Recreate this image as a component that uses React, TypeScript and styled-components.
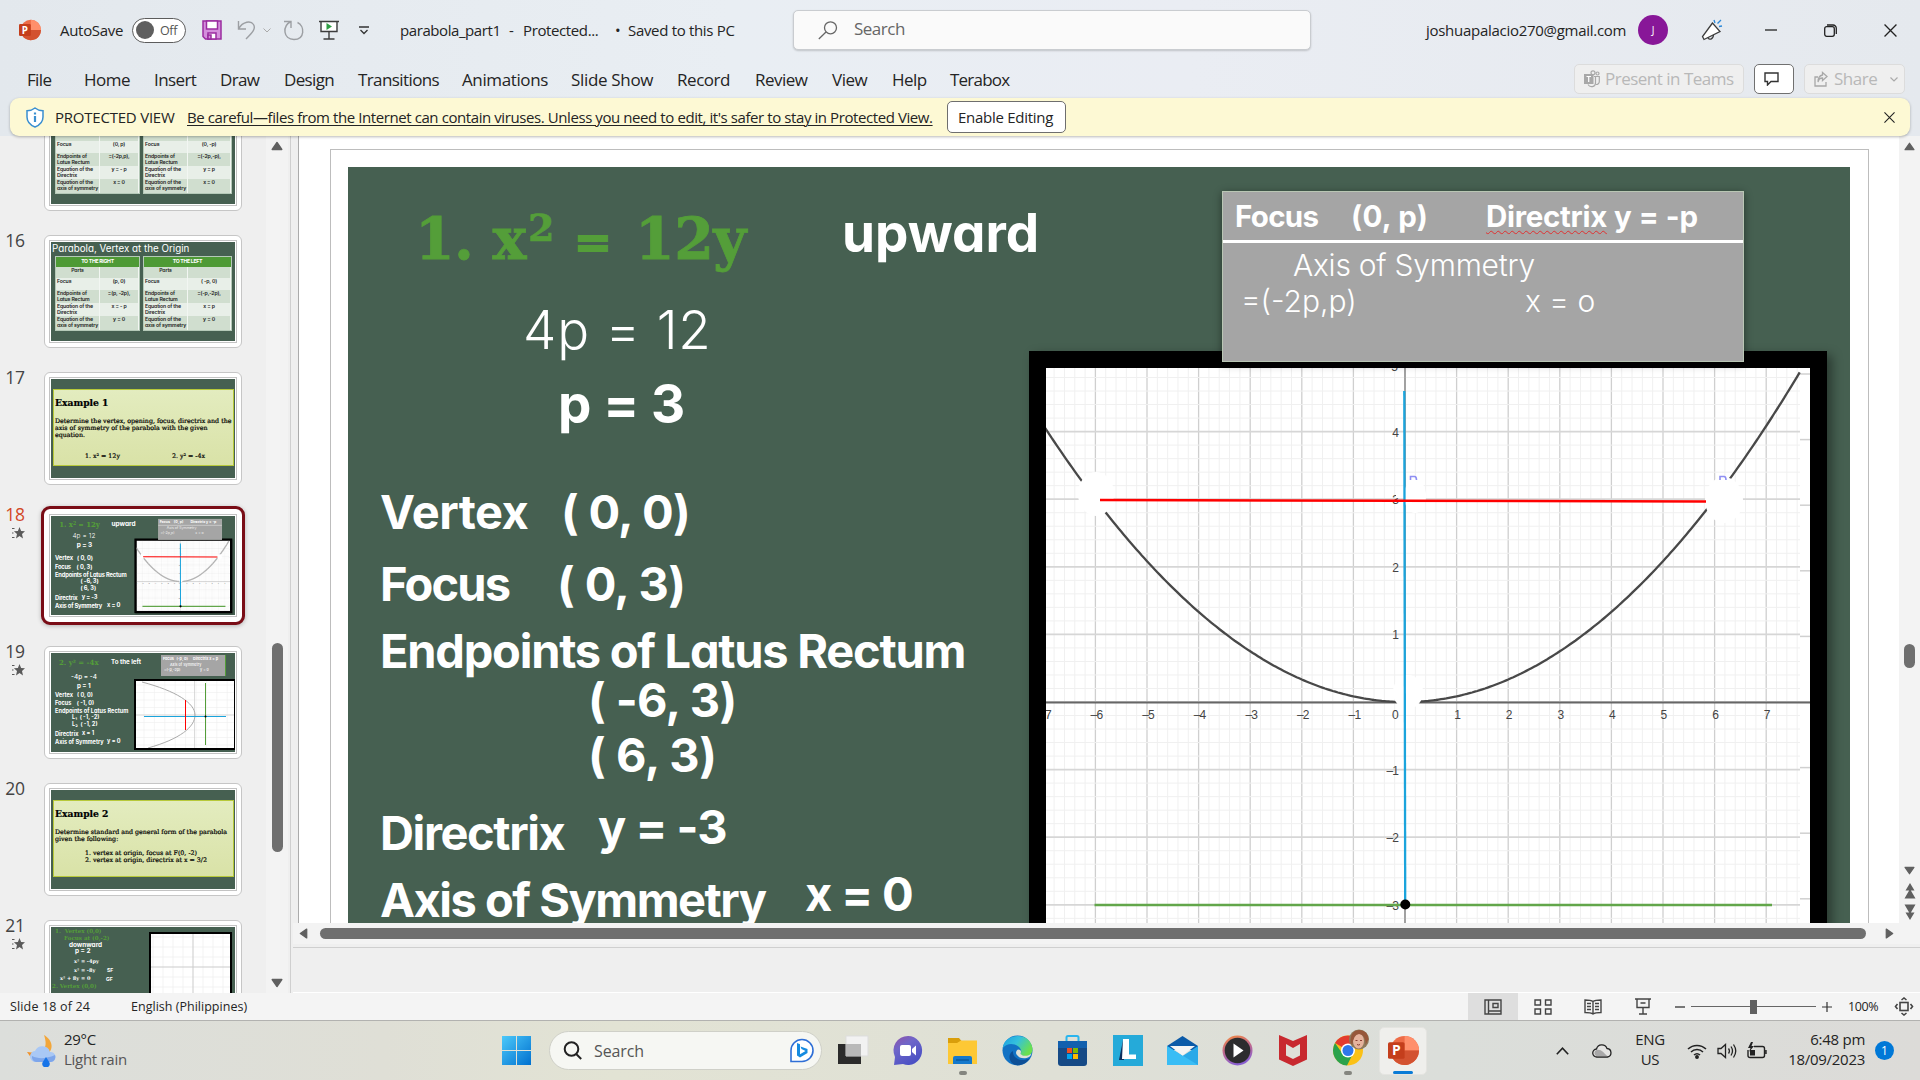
import React from "react";
import styled, { createGlobalStyle, css } from "styled-components";

const Global = createGlobalStyle`
  * { box-sizing: border-box; }
  body { margin: 0; background: #efefef; overflow: hidden; }
  svg { display: block; flex: none; }
`;

const ui = `"Open Sans", "Noto Sans", sans-serif`;
const geo = `Inter, "Open Sans", sans-serif`;
const slab = `"DejaVu Serif", serif`;
const GREEN = "#466051";
const LEAF = "#549e39";

/* ---------- shell ---------- */
const Shell = styled.div`
  width: 1920px;
  height: 1080px;
  display: flex;
  flex-direction: column;
  font-family: ${ui};
  font-size: 15px;
  color: #242424;
  overflow: hidden;
`;
const Header = styled.header`
  height: 136px;
  flex: none;
  display: flex;
  flex-direction: column;
  position: relative;
  z-index: 2;
  background: linear-gradient(90deg, #e3e8ed 0%, #e9eef3 38%, #eaedf3 62%, #e5e9ee 100%);
`;
const Bar = styled.div<{ h: number }>`
  height: ${(p) => p.h}px;
  display: flex;
  align-items: center;
  flex: none;
`;
const Label = styled.span<{ ml?: number; w?: number; ls?: number; size?: number; color?: string; up?: number; weight?: number }>`
  flex: none;
  margin-left: ${(p) => p.ml ?? 0}px;
  width: ${(p) => (p.w ? `${p.w}px` : "auto")};
  letter-spacing: ${(p) => p.ls ?? 0}px;
  font-size: ${(p) => p.size ?? 15}px;
  font-weight: ${(p) => p.weight ?? 400};
  color: ${(p) => p.color ?? "#242424"};
  padding-bottom: ${(p) => p.up ?? 0}px;
  white-space: nowrap;
`;
const Slot = styled.span<{ ml?: number; w: number }>`
  flex: none;
  display: flex;
  justify-content: center;
  align-items: center;
  margin-left: ${(p) => p.ml ?? 0}px;
  width: ${(p) => p.w}px;
`;
const Toggle = styled.span`
  flex: none;
  margin-left: 8px;
  width: 54px;
  height: 25px;
  border: 1px solid #5c5c5c;
  border-radius: 13px;
  background: #fff;
  display: flex;
  align-items: center;
  font-size: 12.5px;
  color: #555;
  gap: 6px;
  padding-left: 3px;
  letter-spacing: -0.4px;
  &::before { content: ""; width: 18px; height: 18px; border-radius: 50%; background: #5f5f5f; }
`;
const SearchBox = styled.div`
  flex: none;
  margin-left: 59px;
  width: 518px;
  height: 40px;
  border: 1px solid #c9ccd0;
  border-radius: 5px;
  background: #fafafa;
  box-shadow: 0 1px 2px rgba(0, 0, 0, 0.18);
  display: flex;
  align-items: center;
  padding-left: 24px;
`;
const Avatar = styled.span`
  flex: none;
  margin-left: 11px;
  width: 30px;
  height: 30px;
  border-radius: 50%;
  background: #881798;
  color: #fff;
  font-size: 10px;
  display: flex;
  align-items: center;
  justify-content: center;
`;
const Pill = styled.span<{ w: number; ml: number; on?: boolean }>`
  flex: none;
  margin-left: ${(p) => p.ml}px;
  width: ${(p) => p.w}px;
  height: 30px;
  border-radius: 5px;
  display: flex;
  align-items: center;
  padding-left: 9px;
  border: 1px solid ${(p) => (p.on ? "#707070" : "#dcdcdc")};
  background: ${(p) => (p.on ? "#fff" : "#efefef")};
`;
const Warning = styled.div`
  margin: 0 10px;
  height: 38px;
  border-radius: 9px;
  background: #fdf9d4;
  box-shadow: 0 1px 3px rgba(0, 0, 0, 0.28);
  display: flex;
  align-items: center;
  padding-left: 16px;
`;
const Underlined = styled(Label)`
  text-decoration: underline;
  text-underline-offset: 2px;
  text-decoration-thickness: 1px;
`;
const EnableButton = styled.button`
  margin: 0 0 0 14px;
  width: 119px;
  height: 32px;
  border: 1px solid #6e6e6e;
  border-radius: 5px;
  background: #fff;
  font: 15px ${ui};
  letter-spacing: -0.28px;
  color: #242424;
  padding: 0 2px 0 0;
`;

/* ---------- body ---------- */
const Body = styled.div`
  height: 857px;
  flex: none;
  display: flex;
  background: #efefef;
`;
const Panel = styled.aside`
  width: 266px;
  height: 857px;
  overflow: hidden;
  flex: none;
  display: flex;
  flex-direction: column;
`;
const ThumbRow = styled.div<{ first?: boolean }>`
  height: 137px;
  flex: none;
  display: flex;
  margin-top: ${(p) => (p.first ? -38 : 0)}px;
`;
const ThumbNo = styled.div<{ on?: boolean }>`
  width: 44px;
  margin-top: -6px;
  padding-right: 19px;
  font-size: 17.5px;
  line-height: 23px;
  letter-spacing: -0.1px;
  white-space: nowrap;
  color: ${(p) => (p.on ? "#d24726" : "#444")};
  display: flex;
  flex-direction: column;
  align-items: flex-end;
  gap: 1px;
`;
const ThumbFrame = styled.div<{ on?: boolean }>`
  width: 198px;
  height: 113px;
  border-radius: 6px;
  background: #fff;
  border: 1px solid #c6c6c6;
  padding: 4px;
  ${(p) => p.on && css`border-color: #fff; outline: 3px solid #7a0d16; box-shadow: 0 1px 4px 3px rgba(0,0,0,.25);`}
`;
const ThumbInner = styled.div`
  width: 188px;
  height: 103px;
  border: 1px solid #c3c3c3;
  padding: 1px;
`;
const Mini = styled.div`
  width: 184px;
  height: 99px;
  background: ${GREEN};
  position: relative;
  overflow: hidden;
`;
const Scroller = styled.div<{ w: number }>`
  width: ${(p) => p.w}px;
  flex: none;
  background: #f3f3f3;
  display: flex;
  flex-direction: column;
  align-items: center;
`;
const Knob = styled.div<{ w: number; h: number; mt?: number; ml?: number }>`
  flex: none;
  width: ${(p) => p.w}px;
  height: ${(p) => p.h}px;
  margin-top: ${(p) => p.mt ?? 0}px;
  margin-left: ${(p) => p.ml ?? 0}px;
  border-radius: 6px;
  background: #6f6f6f;
`;
const Spacer = styled.div<{ h?: number }>`
  flex: ${(p) => (p.h ? "none" : 1)};
  height: ${(p) => (p.h ? `${p.h}px` : "auto")};
`;
const Divider = styled.div`
  width: 8px;
  flex: none;
  border-left: 1px solid #cfcfcf;
  margin-left: 2px;
`;
const Main = styled.main`
  flex: 1;
  display: flex;
  flex-direction: column;
  min-width: 0;
`;
const View = styled.div`
  height: 787px;
  display: flex;
  flex: none;
`;
const Stage = styled.div`
  flex: 1;
  border-left: 1px solid #ababab;
  background: #fff;
  overflow: hidden;
  padding: 13px 0 0 31px;
`;
const Page = styled.div`
  width: 1539px;
  height: 840px;
  border: 1px solid #bdbdbd;
  padding: 17px 0 0 17px;
`;
const HScroll = styled.div`
  height: 21px;
  flex: none;
  display: flex;
  align-items: center;
  background: #f3f3f3;
  margin-left: -5px;
`;
const Notes = styled.div`
  flex: 1;
  margin-top: 3px;
  margin-left: -5px;
  border-top: 1px solid #cfcfcf;
  border-bottom: 1px solid #fff;
`;

/* ---------- slide canvas ---------- */
const Slide = styled.div<{ small?: boolean }>`
  position: relative;
  width: 1502px;
  height: 808px;
  background: ${GREEN};
  ${(p) => p.small && css`transform: scale(0.1225); transform-origin: 0 0;`}
`;
const T = styled.div<{ x: number; base: number; size: number; ls?: number; weight?: number; serif?: boolean; color?: string; heavy?: number }>`
  position: absolute;
  left: ${(p) => p.x}px;
  top: ${(p) => p.base - p.size * (p.serif ? 0.851 : 0.864)}px;
  font: ${(p) => p.weight ?? 700} ${(p) => p.size}px/1 ${(p) => (p.serif ? slab : geo)};
  font-feature-settings: "cv11";
  letter-spacing: ${(p) => p.ls ?? 0}px;
  color: ${(p) => p.color ?? "#fff"};
  -webkit-text-stroke: ${(p) => p.heavy ?? 0}px ${(p) => p.color ?? "#fff"};
  white-space: pre;
`;
const GreyBox = styled.div`
  position: absolute;
  left: 874px;
  top: 24px;
  width: 522px;
  height: 171px;
  background: #a5a5a5;
  border: 1px solid #b9c6b4;
  box-shadow: 0 2px 8px rgba(0, 0, 0, 0.45);
`;
const Rule = styled.div`
  margin: 48px 0 0;
  height: 3px;
  background: #fff;
`;
const Wavy = styled.span`
  text-decoration: underline wavy #e03030 1px;
  text-underline-offset: 3px;
  text-decoration-skip-ink: none;
`;
const GraphFrame = styled.div`
  position: absolute;
  left: 681px;
  top: 184px;
  width: 798px;
  height: 608px;
  background: #000;
  padding: 17px 0 0 17px;
  box-shadow: 5px 4px 10px rgba(0, 0, 0, 0.4);
`;

const OX = 1405, OY = 702, UX = 51.6, UY = 67.6;
const curve = () => {
  let d = "";
  for (let i = -140; i <= 153; i += 1) {
    const x = i / 20;
    d += `${d ? "L" : "M"}${(OX + x * UX).toFixed(1)} ${(OY - (x * x * UY) / 12).toFixed(1)}`;
  }
  return d;
};
const range = (a: number, b: number) => Array.from({ length: b - a + 1 }, (_, i) => a + i);

function Graph({ small }: { small?: boolean }) {
  const k3 = small ? 3.6 : 1;
  return (
    <svg width="764" height="574" viewBox="1046 368 764 574">
      <rect x="1046" y="368" width="764" height="574" fill="#fff" />
      {range(-34, 38).map((k) => (
        <path key={"v" + k} d={`M${OX + (k * UX) / 5} 368V942`} stroke={k % 5 ? "#f0f0f0" : "#cfcfcf"} strokeWidth={k % 5 ? 1 : 1.3} />
      ))}
      {range(-17, 24).map((k) => (
        <path key={"h" + k} d={`M1046 ${OY - (k * UY) / 5}H1800`} stroke={k % 5 ? "#f0f0f0" : "#d6d6d6"} strokeWidth={k % 5 ? 1 : 1.8} />
      ))}
      {range(-3, 5).map((k) => (
        <path key={"s" + k} d={`M1800 ${OY - k * 65.6}H1810`} stroke="#d0d0d0" strokeWidth="1.5" />
      ))}
      <path d="M1405 368V942" stroke="#777" strokeWidth="1.2" />
      <path d="M1046 702.500H1810" stroke="#666" strokeWidth="1.8" />
      <path d={curve()} fill="none" stroke={small ? "#b4b4b4" : "#484848"} strokeWidth={small ? 11 : 2.3} />
      <g fontFamily="Liberation Sans, sans-serif" fontSize="12" fill="#444">
        {range(-6, 7).filter((k) => k !== 0).map((k) => (
          <text key={k} x={OX + k * UX + (k < 0 ? 1 : 0.5)} y="719" textAnchor="middle" letterSpacing="-0.9">{k < 0 ? `–${-k}` : k}</text>
        ))}
        <text x="1392" y="719">0</text>
        <text x="1045" y="719">7</text>
        {[4, 3, 2, 1, -1, -2, -3].map((k) => (
          <text key={"y" + k} x="1398" y={OY - k * UY + 5} textAnchor="end" letterSpacing="-0.9">{k < 0 ? `–${-k}` : k}</text>
        ))}
        <text x="1398" y="371" textAnchor="end">5</text>
      </g>
      <ellipse cx="1096" cy="494" rx="18" ry="22" fill="#fff" />
      <ellipse cx="1724" cy="500" rx="19" ry="23" fill="#fff" />
      <ellipse cx="1415" cy="496" rx="11" ry="17" fill="#fff" />
      <ellipse cx="1408" cy="692" rx="15" ry="17" fill="#fff" />
      <rect x="1396" y="490" width="7" height="8" fill="#fff" />
      <path d="M1410.500 480v-3.500h4q2 0 2 3.500M1720 480v-3.500h4q2 0 2 3.500" fill="none" stroke="#8f8ff2" strokeWidth="1.6" />
      <path d="M1094.500 905H1772" stroke="#62a64a" strokeWidth={2.6 * k3} />
      <path d="M1404.300 391L1405.200 904" stroke="#1ba4dc" strokeWidth={2.3 * k3} />
      <path d="M1100 500L1706 501.500" stroke="#f00" strokeWidth={2.5 * k3} />
      <circle cx="1405.300" cy="904.500" r={5 * (small ? 1.8 : 1)} fill="#000" />
    </svg>
  );
}

function MainSlide({ small }: { small?: boolean }) {
  return (
    <Slide small={small}>
      <T serif x={67} base={92} size={57} ls={-0.6} color={LEAF} heavy={0.8}>1. x</T>
      <T serif x={180} base={74} size={38} color={LEAF} heavy={0.6}>2</T>
      <T serif x={226} base={91} size={45} color={LEAF} heavy={2}>=</T>
      <T serif x={287} base={92} size={57} ls={-0.5} color={LEAF} heavy={0.8}>12y</T>
      <T x={494} base={86} size={53}>upward</T>
      <T x={175} base={183} size={53} ls={0.8} weight={300}>4p = 12</T>
      <T x={210} base={257} size={53} ls={-0.4}>p = 3</T>
      <T x={32} base={362} size={47} ls={-0.5}>Vertex</T>
      <T x={213} base={362} size={47} ls={-0.7}>( 0, 0)</T>
      <T x={32} base={434} size={47} ls={-1.8}>Focus</T>
      <T x={209} base={434} size={47} ls={-0.6}>( 0, 3)</T>
      <T x={32} base={501} size={47} ls={-1.25}>Endpoints of Latus Rectum</T>
      <T x={240} base={550} size={47} ls={-0.6}>( -6, 3)</T>
      <T x={240} base={605} size={47} ls={-0.4}>( 6, 3)</T>
      <T x={32} base={683} size={47} ls={-1.4}>Directrix</T>
      <T x={250} base={677} size={47} ls={-1}>y = -3</T>
      <T x={32} base={750} size={47} ls={-1.5}>Axis of Symmetry</T>
      <T x={457} base={744} size={47} ls={-1.1}>x = 0</T>
      <GraphFrame><Graph small={small} /></GraphFrame>
      <GreyBox><Rule /></GreyBox>
      <T x={887} base={60} size={29.5} ls={-0.7}>Focus</T>
      <T x={1003} base={60} size={29.5} ls={0.3}>(0, p)</T>
      <T x={1138} base={60} size={29.5} ls={-0.3}><Wavy>Directrix</Wavy></T>
      <T x={1266} base={60} size={29.5}>y = -p</T>
      <T x={945} base={109} size={30} ls={-0.25} weight={300}>Axis of Symmetry</T>
      <T x={893} base={145} size={30} ls={0} weight={300}>=(-2p,p)</T>
      <T x={1177} base={145} size={30} weight={300}>x = o</T>
    </Slide>
  );
}

/* ---------- thumbnails ---------- */
const MiniTitle = styled.div`
  font: 400 9.8px/14px ${geo};
  font-feature-settings: "cv11";
  color: #fff;
  padding-left: 1px;
  white-space: nowrap;
`;
const Tables = styled.div`
  display: flex;
  gap: 3px;
  padding-left: 4px;
`;
const MiniTable = styled.div<{ w: number }>`
  width: ${(p) => p.w}px;
  display: grid;
  grid-template-columns: 44px 1fr;
  border: 1px solid #b5c9b8;
  font: 600 5.2px/6px ${geo};
  font-feature-settings: "cv11";
  color: #222;
`;
const HeadCell = styled.div`
  grid-column: span 2;
  background: #4e9a35;
  color: #fff;
  font-weight: 700;
  height: 10px;
  line-height: 8px;
  text-align: center;
  letter-spacing: -0.3px;
`;
const Cell = styled.div<{ dark?: boolean; mid?: boolean; h?: number }>`
  height: ${(p) => p.h ?? 13}px;
  background: ${(p) => (p.dark ? "#d0decf" : "#e8efe8")};
  border-right: 1px solid #f2f6f2;
  padding: 0 1px;
  text-align: ${(p) => (p.mid ? "center" : "left")};
  letter-spacing: -0.15px;
  white-space: nowrap;
`;
function PropTable({ w, head, v }: { w: number; head: string; v: string[] }) {
  return (
    <MiniTable w={w}>
      <HeadCell>{head}</HeadCell>
      <Cell dark mid h={11}>Parts</Cell><Cell dark h={11} />
      <Cell h={12}>Focus</Cell><Cell mid h={12}>{v[0]}</Cell>
      <Cell dark>Endpoints of<br />Latus Rectum</Cell><Cell dark mid>{v[1]}</Cell>
      <Cell>Equation of the<br />Directrix</Cell><Cell mid>{v[2]}</Cell>
      <Cell dark h={14}>Equation of the<br />axis of symmetry</Cell><Cell dark mid h={14}>{v[3]}</Cell>
    </MiniTable>
  );
}
function TableSlide({ heads, a, b }: { heads: string[]; a: string[]; b: string[] }) {
  return (
    <Mini>
      <MiniTitle>Parabola, Vertex at the Origin</MiniTitle>
      <Tables>
        <PropTable w={85} head={heads[0]} v={a} />
        <PropTable w={89} head={heads[1]} v={b} />
      </Tables>
    </Mini>
  );
}
const Card = styled.div`
  margin: 10px 1px 0 2px;
  height: 77px;
  border: 1px solid #b7c93a;
  background: linear-gradient(#e3ecbf, #d9e2a7);
  font: 400 6.3px/7px ${slab};
  color: #000;
  -webkit-text-stroke: 0.2px #000;
  padding: 6px 0 0 1px;
  white-space: pre;
`;
const CardTitle = styled.div`
  font: 700 9.2px/13px ${slab};
  margin-bottom: 8px;
`;
const CardLine = styled.div<{ mt?: number }>`
  margin-top: ${(p) => p.mt ?? 0}px;
  padding-left: 30px;
  display: flex;
  gap: 52px;
`;
const MiniBox = styled.div<{ x: number; y: number; w: number; h: number; grey?: boolean }>`
  position: absolute;
  left: ${(p) => p.x}px;
  top: ${(p) => p.y}px;
  width: ${(p) => p.w}px;
  height: ${(p) => p.h}px;
  background: ${(p) => (p.grey ? "#a5a5a5" : "#000")};
  padding: ${(p) => (p.grey ? 0 : 2)}px;
  border-right: ${(p) => (p.grey ? "1px solid #549e39" : "0")};
`;

function Slide19() {
  return (
    <Mini>
      <T serif x={8} base={12} size={7} color={LEAF}>2. y² = -4x</T>
      <T x={60} base={11} size={6.2}>To the left</T>
      <T x={20} base={27} size={6.4} weight={500}>-4p = -4</T>
      <T x={26} base={35} size={6.2}>p = 1</T>
      <T x={4} base={44.5} size={5.6}>Vertex   ( 0, 0)</T>
      <T x={4} base={53} size={5.6}>Focus    ( -1, 0)</T>
      <T x={4} base={61} size={5.6}>Endpoints of Latus Rectum</T>
      <T x={21} base={67} size={5.6}>L₁  ( -1, -2)</T>
      <T x={21} base={74} size={5.6}>L₂  ( -1, 2)</T>
      <T x={4} base={84} size={5.6}>Directrix</T>
      <T x={31} base={83} size={5.6}>x = 1</T>
      <T x={4} base={92} size={5.6}>Axis of Symmetry</T>
      <T x={56} base={91} size={5.6}>y = 0</T>
      <MiniBox x={110} y={2} w={65} h={21} grey />
      <T x={112} base={7.5} size={3.7}>Focus   (-p, 0)      Directrix x = p</T>
      <T x={119} base={13} size={3.7} weight={500}>Axis of Symmetry</T>
      <T x={113} base={18} size={3.7} weight={500}>=(-p,-2p)                    y = o</T>
      <MiniBox x={83} y={26} w={102} h={71}>
        <svg width="98" height="67" viewBox="0 0 98 67">
          <rect width="98" height="67" fill="#fff" />
          {range(0, 9).map((k) => <path key={k} d={`M${8 + k * 10.4} 0V67M0 ${4 + k * 7.5}H98`} stroke="#eee" strokeWidth=".6" />)}
          <path d="M0 34H98M58.500 0V67" stroke="#ccc" strokeWidth=".7" />
          <path d="M6 1C40 10 59 22 59 34S44 58 12 67" fill="none" stroke="#aaa" />
          <path d="M8 35.500H90" stroke="#1ba4dc" />
          <path d="M49.500 19V49" stroke="#f00" />
          <path d="M69.500 2V64" stroke="#549e39" />
          <circle cx="69.500" cy="35.500" r="1" />
        </svg>
      </MiniBox>
    </Mini>
  );
}
function Slide21() {
  return (
    <Mini>
      <T serif x={4} base={7} size={5.6} color={LEAF}>1.  Vertex (0,0)</T>
      <T serif x={13} base={14} size={5.6} color={LEAF}>Focus at (0,-2)</T>
      <T x={18} base={20.5} size={6.4}>downward</T>
      <T x={24} base={27} size={6.4}>p = 2</T>
      <T serif x={23} base={36} size={5}>x² = -4py</T>
      <T serif x={23} base={45} size={5}>x² = -8y</T>
      <T x={56} base={45} size={5}>SF</T>
      <T serif x={9} base={53} size={5}>x² + 8y = 0</T>
      <T x={55} base={54} size={5}>GF</T>
      <T serif x={1} base={62} size={5.6} color={LEAF}>2. Vertex (0,0)</T>
      <MiniBox x={98} y={5} w={83} h={93}>
        <svg width="79" height="90" viewBox="0 0 79 90">
          <rect width="79" height="90" fill="#fff" />
          {range(0, 9).map((k) => <path key={k} d={`M${2 + k * 10} 0V90M0 ${3 + k * 10}H79`} stroke="#eee" strokeWidth=".7" />)}
          <path d="M0 33H79M42 0V90" stroke="#ccc" strokeWidth=".9" />
        </svg>
      </MiniBox>
    </Mini>
  );
}

const Star = () => (
  <svg width="13" height="12" viewBox="0 0 13 12" fill="#5a5a5a">
    <path d="M7.500 0l1.600 3.900 4 .3-3.100 2.700 1 4.600-3.500-2.500-3.500 2.500 1-4.600L1.900 4.200l4-.3z" />
    <path d="M0 1.500h2.500M0 6h1.500M0 10.500h2.500" stroke="#5a5a5a" />
  </svg>
);
type Dir = "u" | "d" | "l" | "r";
const Tri = ({ dir, s = 11 }: { dir: Dir; s?: number }) => {
  const r = { u: 0, r: 90, d: 180, l: 270 }[dir];
  return (
    <svg width={s} height={s} viewBox="0 0 12 12">
      <path transform={`rotate(${r} 6 6)`} d="M6 2.500L10.800 9.500H1.200z" fill="#606060" stroke="#606060" strokeLinejoin="round" strokeWidth="1.400" />
    </svg>
  );
};
const DoubleTri = ({ down }: { down?: boolean }) => (
  <svg width="12" height="16" viewBox="0 0 12 16" fill="#606060">
    <path transform={down ? "rotate(180 6 8)" : undefined} d="M6 0l4.500 7.500h-9zM6 6l5.500 9.500H.5z" />
  </svg>
);

function Thumb({ n, on, star, first, children }: { n?: number; on?: boolean; star?: boolean; first?: boolean; children: React.ReactNode }) {
  return (
    <ThumbRow first={first}>
      <ThumbNo on={on}>{n}{star && <Star />}</ThumbNo>
      <ThumbFrame on={on}><ThumbInner>{children}</ThumbInner></ThumbFrame>
    </ThumbRow>
  );
}

/* ---------- status + taskbar ---------- */
const Status = styled.footer`
  height: 28px;
  flex: none;
  background: #f4f4f4;
  border-bottom: 1px solid #b2b2b0;
  display: flex;
  align-items: center;
  padding-left: 10px;
`;
const ViewButton = styled.span<{ on?: boolean; ml?: number }>`
  width: 50px;
  height: 27px;
  flex: none;
  margin-left: ${(p) => p.ml ?? 0}px;
  display: flex;
  align-items: center;
  justify-content: center;
  background: ${(p) => (p.on ? "#dedede" : "transparent")};
`;
const Slider = styled.span`
  flex: none;
  margin-left: 6px;
  width: 125px;
  height: 14px;
  display: flex;
  justify-content: center;
  background: linear-gradient(#666, #666) center / 100% 1px no-repeat;
  &::before { content: ""; width: 7px; height: 14px; background: #606060; }
`;
const Taskbar = styled.div`
  flex: 1;
  background: linear-gradient(90deg, #dcdedb 0%, #dfdfd6 20%, #e2e3d4 32%, #dfe0d6 55%, #dbdeda 75%, #dcdbd8 100%);
  display: flex;
  align-items: center;
`;
const Stack = styled.div<{ ml: number; w: number; align?: string }>`
  flex: none;
  margin-left: ${(p) => p.ml}px;
  width: ${(p) => p.w}px;
  display: flex;
  flex-direction: column;
  align-items: ${(p) => p.align ?? "flex-start"};
  line-height: 20px;
  white-space: nowrap;
  letter-spacing: -0.28px;
  padding-bottom: 3px;
`;
const Dim = styled.span`color: #555;`;
const TaskSearch = styled.div`
  flex: none;
  margin-left: 18px;
  width: 273px;
  height: 39px;
  border-radius: 20px;
  background: #f6f7f3;
  border: 1px solid #cfd0c8;
  display: flex;
  align-items: center;
  padding-left: 13px;
`;
const AppButton = styled.div`
  width: 55px;
  height: 58px;
  flex: none;
  display: flex;
  flex-direction: column;
  align-items: center;
  padding-top: 13px;
  svg { height: 31px; overflow: visible; }
`;
const Active = styled.div`
  width: 48px;
  height: 48px;
  margin: 0 4px;
  flex: none;
  border-radius: 5px;
  background: #efefec;
  border: 1px solid #e4e4e0;
  display: flex;
  flex-direction: column;
  align-items: center;
  padding-top: 7px;
  svg { height: 31px; }
`;
const Mark = styled.div<{ w: number; on?: boolean }>`
  margin-top: 5px;
  width: ${(p) => p.w}px;
  height: 4px;
  border-radius: 2px;
  background: ${(p) => (p.on ? "#0a7bd6" : "#84857f")};
`;
const Badge = styled.span`
  flex: none;
  margin-left: 10px;
  width: 19px;
  height: 19px;
  border-radius: 50%;
  background: #0078d7;
  color: #fff;
  font-size: 12px;
  display: flex;
  align-items: center;
  justify-content: center;
`;

const PptIcon = ({ s }: { s: number }) => (
  <svg width={s} height={s} viewBox="0 0 28 28">
    <circle cx="15" cy="14" r="13" fill="#ed6c47" />
    <path d="M15 1a13 13 0 0 1 13 13H15z" fill="#ff8f6b" />
    <path d="M28 14a13 13 0 0 1-24 7l11-7z" fill="#d35230" />
    <rect x="0" y="6.500" width="15" height="15" rx="1.500" fill="#c43e1c" />
    <text x="7.500" y="18.500" fontFamily="Open Sans" fontWeight="700" fontSize="12.500" fill="#fff" textAnchor="middle">P</text>
  </svg>
);
const X = ({ s = 12 }: { s?: number }) => (
  <svg width={s} height={s} viewBox="0 0 12 12" stroke="#222" strokeWidth="1.200"><path d="M.5.5l11 11M11.500.5l-11 11" /></svg>
);
const st = { fill: "none", stroke: "#444", strokeWidth: 1.4 };
const menu: [string, number, number][] = [
  ["File", 27, -0.65], ["Home", 84, -0.5], ["Insert", 154, -0.6], ["Draw", 220, -0.65], ["Design", 284, -0.65],
  ["Transitions", 358, -0.6], ["Animations", 462, -0.38], ["Slide Show", 571, -0.33], ["Record", 677, -0.45],
  ["Review", 755, -0.5], ["View", 832, -0.5], ["Help", 892, -0.5], ["Terabox", 950, -0.78],
];
const MenuItem = styled.span<{ w: number; ls: number }>`
  flex: none;
  width: ${(p) => p.w}px;
  letter-spacing: ${(p) => p.ls}px;
  font-size: 17px;
`;

function TitleBar() {
  return (
    <Bar h={60}>
      <Slot ml={18} w={24}><PptIcon s={22} /></Slot>
      <Label ml={18} w={64} ls={-0.3}>AutoSave</Label>
      <Toggle>Off</Toggle>
      <Slot ml={16} w={20}>
        <svg width="20" height="20" viewBox="0 0 20 20" fill="#d48fdc" stroke="#9a2ca0" strokeWidth="1.500">
          <path d="M1 1h18v18H3.500L1 16.500z" /><path d="M4.500 1h11v8h-11z" fill="#fff" /><path d="M6 19v-6h8v6z" fill="#fff" /><path d="M6 15h3v4H6z" />
        </svg>
      </Slot>
      <Slot ml={15} w={20}>
        <svg width="20" height="20" viewBox="0 0 20 20" fill="none" stroke="#9c9fa3" strokeWidth="1.400"><path d="M1.500 1v8h7.500M1.500 9C6 1 14 .5 16.500 4.500S16 12 9 19" /></svg>
      </Slot>
      <Slot ml={6} w={8}><svg width="8" height="5" viewBox="0 0 8 5" fill="none" stroke="#aaa"><path d="M.5.5L4 4 7.500.5" /></svg></Slot>
      <Slot ml={12} w={22}>
        <svg width="22" height="21" viewBox="0 0 22 21" fill="none" stroke="#9c9fa3" strokeWidth="1.400"><path d="M1 1.500h7v6.500M8 1.500C-1 6 0 19.500 11 19.500S22 6 14.500 2.500" /></svg>
      </Slot>
      <Slot ml={14} w={20}>
        <svg width="20" height="20" viewBox="0 0 20 20" fill="none" stroke="#3c3c3c" strokeWidth="1.400"><path d="M2.700 2.200h14.600v8.600H2.700z" fill="#fff" stroke="none" /><path d="M0 1.500h20M2 1.500v10h16v-10M10 11.500v7M4.500 19h11" /><path d="M7.500 3v7l5.500-3.500z" fill="#2e9e44" stroke="none" /></svg>
      </Slot>
      <Slot ml={20} w={10}><svg width="10" height="9" viewBox="0 0 10 9" fill="none" stroke="#333" strokeWidth="1.300"><path d="M0 1h10M1.500 4L5 7.500 8.500 4" /></svg></Slot>
      <Label ml={31} w={109} ls={-0.42}>parabola_part1</Label>
      <Label w={14}>-</Label>
      <Label w={92} ls={-0.38}>Protected...</Label>
      <Label w={13}>•</Label>
      <Label w={106} ls={-0.32}>Saved to this PC</Label>
      <SearchBox>
        <svg width="20" height="19" viewBox="0 0 20 19" fill="none" stroke="#666" strokeWidth="1.300"><circle cx="12.500" cy="6.800" r="6" /><path d="M8 11L.8 18" /></svg>
        <Label ml={16} size={17} ls={-0.5} color="#666" up={3}>Search</Label>
      </SearchBox>
      <Label ml={115} w={201} ls={-0.28}>joshuapalacio270@gmail.com</Label>
      <Avatar>J</Avatar>
      <Slot ml={33} w={22}>
        <svg width="22" height="22" viewBox="0 0 22 22" fill="none" stroke="#3c3c3c" strokeWidth="1.300"><path d="M11.500 4L1.500 17.500l1.500 3L19 12.500z" fill="#fff" /><path d="M7 18.500c1 3 5 2 5.500-2.500" /><path d="M14 4l-1-3M16.500 4.500L20 1M18 7.500l3-.5" stroke="#2b88d8" /></svg>
      </Slot>
      <Slot ml={42} w={12}><svg width="12" height="2"><path d="M0 1h12" stroke="#222" strokeWidth="1.300" /></svg></Slot>
      <Slot ml={47} w={13}>
        <svg width="13" height="13" viewBox="0 0 13 13" fill="none" stroke="#222" strokeWidth="1.300"><rect x=".7" y="2.700" width="9.600" height="9.600" rx="2" /><path d="M3 1h6a3.300 3.300 0 0 1 3.300 3.300V10" /></svg>
      </Slot>
      <Slot ml={47} w={13}><X s={13} /></Slot>
    </Bar>
  );
}

function RibbonBar() {
  return (
    <Bar h={38}>
      <Slot w={27} />
      {menu.map(([t, x, ls], i) => <MenuItem key={t} ls={ls} w={(menu[i + 1]?.[1] ?? 1574) - x}>{t}</MenuItem>)}
      <Pill w={170} ml={0}>
        <svg width="16" height="18" viewBox="0 0 16 18" fill="none" stroke="#a8a8a8" strokeWidth="1.200"><rect y="4" width="9.500" height="10" fill="#a8a8a8" stroke="none" /><circle cx="9" cy="2.800" r="2" /><circle cx="13.500" cy="3.500" r="1.500" /><path d="M10 6.500h5.300v5a3 3 0 0 1-3.300 3M4 14.500c2 3.500 7.500 2.500 7.500-1.500V6.500" /><path d="M2.500 6.500h4.500M4.700 6.500v5.500" stroke="#fff" /></svg>
        <Label ml={5} size={17} ls={-0.5} color="#b8b8b8" up={2}>Present in Teams</Label>
      </Pill>
      <Pill w={40} ml={10} on>
        <svg width="15" height="14" viewBox="0 0 15 14" fill="none" stroke="#333" strokeWidth="1.400"><path d="M1 1h13v8.500H7L3.500 13V9.500H1z" /></svg>
      </Pill>
      <Pill w={101} ml={10}>
        <svg width="14" height="16" viewBox="0 0 14 16" fill="none" stroke="#a8a8a8" strokeWidth="1.300"><path d="M4 6H1v9h11v-4M8.500 1.500l4.500 4-4.500 4V7C6 7 4.500 8.500 4 11c0-4.500 2-6.500 4.500-7z" /></svg>
        <Label ml={6} w={56} size={17} ls={-0.5} color="#b8b8b8" up={2}>Share</Label>
        <svg width="8" height="5" viewBox="0 0 8 5" fill="none" stroke="#aaa" strokeWidth="1.200"><path d="M.5.5L4 4 7.500.5" /></svg>
      </Pill>
    </Bar>
  );
}

export default function App() {
  return (
    <Shell>
      <Global />
      <Header>
        <TitleBar />
        <RibbonBar />
        <Warning>
          <svg width="18" height="21" viewBox="0 0 18 21" fill="#fff" stroke="#3a8fd0" strokeWidth="1.500"><path d="M9 1c2.500 2 5 2.800 8 2.800V10c0 5-3 8-8 10-5-2-8-5-8-10V3.800C4 3.800 6.500 3 9 1z" /><path d="M9 9v6M9 5.500v2" strokeWidth="2.200" /></svg>
          <Label ml={11} w={132} ls={-0.22}>PROTECTED VIEW</Label>
          <Underlined w={746} ls={-0.415}>Be careful—files from the Internet can contain viruses. Unless you need to edit, it's safer to stay in Protected View.</Underlined>
          <EnableButton>Enable Editing</EnableButton>
          <Slot ml={817} w={12}><X s={11} /></Slot>
        </Warning>
      </Header>

      <Body>
        <Panel>
          <Thumb first><TableSlide heads={["UPWARD", "DOWNWARD"]} a={["(0, p)", "=(-2p,p),", "y = - p", "x = 0"]} b={["(0, -p)", "=(-2p,-p),", "y = p", "x = 0"]} /></Thumb>
          <Thumb n={16}><TableSlide heads={["TO THE RIGHT", "TO THE LEFT"]} a={["(p, 0)", "=(p, -2p),", "x = - p", "y = 0"]} b={["( -p, 0)", "=(-p,-2p),", "x = p", "y = 0"]} /></Thumb>
          <Thumb n={17}>
            <Mini><Card><CardTitle>Example 1</CardTitle>{"Determine the vertex, opening, focus, directrix and the\naxis of symmetry of the parabola with the given\nequation."}<CardLine mt={14}><span>1. x² = 12y</span><span>2. y² = -4x</span></CardLine></Card></Mini>
          </Thumb>
          <Thumb n={18} on star><Mini><MainSlide small /></Mini></Thumb>
          <Thumb n={19} star><Slide19 /></Thumb>
          <Thumb n={20}>
            <Mini><Card><CardTitle>Example 2</CardTitle>{"Determine standard and general form of the parabola\ngiven the following:"}<CardLine mt={7}>1. vertex at origin, focus at F(0, -2)</CardLine><CardLine>2. vertex at origin, directrix at x = 3/2</CardLine></Card></Mini>
          </Thumb>
          <Thumb n={21} star><Slide21 /></Thumb>
        </Panel>
        <Scroller w={22}>
          <Spacer h={4} /><Tri dir="u" s={12} />
          <Knob w={11} h={209} mt={491} />
          <Spacer /><Tri dir="d" s={12} /><Spacer h={4} />
        </Scroller>
        <Divider />
        <Main>
          <View>
            <Stage><Page><MainSlide /></Page></Stage>
            <Scroller w={21}>
              <Spacer h={5} /><Tri dir="u" />
              <Knob w={11} h={24} mt={492} />
              <Spacer />
              <Tri dir="d" /><Spacer h={7} />
              <DoubleTri /><Spacer h={5} />
              <DoubleTri down /><Spacer h={3} />
            </Scroller>
          </View>
          <HScroll>
            <Slot ml={4} w={13}><Tri dir="l" /></Slot><Knob w={1546} h={11} ml={10} /><Slot ml={16} w={14}><Tri dir="r" /></Slot>
          </HScroll>
          <Notes />
        </Main>
      </Body>

      <Status>
        <Label w={121} size={12.5} ls={0.15}>Slide 18 of 24</Label>
        <Label w={130} size={12.5} ls={0.02}>English (Philippines)</Label>
        <ViewButton on ml={1207}><svg width="18" height="16" viewBox="0 0 18 16" {...st}><path d="M1 1h16v14H1zM4.500 1v14M4.500 12H17M9 4.500h5v4H9z" /></svg></ViewButton>
        <ViewButton><svg width="18" height="16" viewBox="0 0 18 16" {...st}><path d="M1 1h5.500v5H1zM11.500 1H17v5h-5.500zM1 10h5.500v5H1zM11.500 10H17v5h-5.500z" /></svg></ViewButton>
        <ViewButton><svg width="18" height="16" viewBox="0 0 18 16" {...st}><path d="M9 2.500C7 1 4 1 1 1v12.500c3 0 6 0 8 1.500 2-1.500 5-1.500 8-1.500V1c-3 0-6 0-8 1.500zV15M3 4.500h4M3 7.500h4M3 10.500h4M11 4.500h4M11 7.500h4M11 10.500h4" /></svg></ViewButton>
        <ViewButton><svg width="18" height="17" viewBox="0 0 18 17" {...st}><path d="M1 1h16M3 1v8.500h12V1M9 9.500V16M5 16h8M6.500 5h5" /></svg></ViewButton>
        <Slot ml={6} w={11}><svg width="10" height="2"><path d="M0 1h10" stroke="#333" strokeWidth="1.300" /></svg></Slot>
        <Slider />
        <Slot ml={5} w={11}><svg width="10" height="10"><path d="M0 5h10M5 0v10" stroke="#333" strokeWidth="1.200" /></svg></Slot>
        <Label ml={16} w={46} size={12.5} ls={-0.4}>100%</Label>
        <svg width="20" height="19" viewBox="0 0 20 19" {...st} strokeWidth={1.6}><rect x="6" y="5.500" width="8" height="8" /><path d="M7.500 3L10 1l2.500 2M7.500 16L10 18l2.500-2M3.500 7L1.500 9.500l2 2.500M16.500 7l2 2.500-2 2.500" /></svg>
      </Status>

      <Taskbar>
        <Slot ml={26} w={32}>
          <svg width="34" height="32" viewBox="0 0 30 32">
            <path d="M17 0c7 4 11 12 4 19l-6-2c5-5 4-11 2-17z" fill="#f2a63a" /><path d="M0 17l9 1-4 6z" fill="#f0922b" />
            <path d="M9 27a5.500 5.500 0 0 1-1-11 8 8 0 0 1 15 1 5 5 0 0 1 1 10z" fill="#a9c8f5" /><path d="M9 27a5.500 5.500 0 0 1-4-6c6 3 14 3 23-1a5 5 0 0 1-4 7z" fill="#7ea6ea" />
            <path d="M19 22l3.200 5a3.700 3.700 0 1 1-6.400 0z" fill="#1674e8" />
          </svg>
        </Slot>
        <Stack ml={6} w={66}><span>29°C</span><Dim>Light rain</Dim></Stack>
        <Slot ml={371} w={30}>
          <svg width="29" height="29" viewBox="0 0 29 29"><defs><linearGradient id="win" x1="0" y1="0" x2="1" y2="1"><stop offset="0" stopColor="#4cc9fa" /><stop offset="1" stopColor="#0070cf" /></linearGradient></defs><path fill="url(#win)" d="M0 0h14v14H0zM15 0h14v14H15zM0 15h14v14H0zM15 15h14v14H15z" /></svg>
        </Slot>
        <TaskSearch>
          <svg width="19" height="19" viewBox="0 0 19 19" fill="none" stroke="#222" strokeWidth="2"><circle cx="8.500" cy="8" r="6.800" /><path d="M13.200 13l5 5" /></svg>
          <Label ml={12} w={195} size={16} ls={-0.1} color="#555">Search</Label>
          <svg width="25" height="25" viewBox="0 0 25 25"><path d="M2 23.500V12.500a11 11 0 1 1 11 11z" fill="#fff" stroke="#2f6fd6" strokeWidth="1.600" /><path d="M8 5l3 1.200v10L16.500 13 12.500 11 11.500 8.500 18.500 11v4L11 19.500 8 17.500z" fill="#168be0" /></svg>
        </TaskSearch>
        <Slot ml={3} w={0} />
        <AppButton><svg width="31" viewBox="0 0 31 31"><path d="M1 9h23v20H1z" fill="#2b2b2b" /><path d="M9 1h22v20H9z" fill="#f2f2f2" stroke="#ddd" /><path d="M9 9h15v12H9z" fill="#b9b9b9" /></svg></AppButton>
        <AppButton><svg width="30" viewBox="0 0 30 31"><defs><linearGradient id="chat" x1="0" y1="0" x2=".6" y2="1"><stop offset="0" stopColor="#9150a8" /><stop offset=".4" stopColor="#6f66c9" /><stop offset="1" stopColor="#4a50c4" /></linearGradient></defs><path d="M15 1a14 14.500 0 1 1-5 28L1 30l1-8A14.500 14.500 0 0 1 15 1z" fill="url(#chat)" /><rect x="7" y="10" width="11" height="11" rx="2" fill="#fff" /><path d="M19 14l4-3.500v10L19 17z" fill="#fff" /></svg></AppButton>
        <AppButton><svg width="31" viewBox="0 0 31 31"><path d="M1 3h11l2.500 3H30v10H1z" fill="#d99e0b" /><path d="M1 8h9l4-2.500h16V29H1z" fill="#fdc835" /><path d="M6 29v-6q0-2 2-2h15q2 0 2 2v6z" fill="#1579cc" /><path d="M9 25h13" stroke="#0a5aa0" strokeWidth="1.500" /></svg><Mark w={8} /></AppButton>
        <AppButton><svg width="31" viewBox="0 0 31 31"><defs><linearGradient id="ed" x1="0" y1="0" x2="1" y2=".5"><stop offset="0" stopColor="#1b9de2" /><stop offset=".5" stopColor="#35c1dd" /><stop offset="1" stopColor="#6be04e" /></linearGradient></defs><circle cx="15.500" cy="15.500" r="15" fill="#1272c4" /><path d="M.8 13C2-2 29-4 30.500 14c0 7-7 8.500-12 6-1-1 1.500-2 .5-5C17 9 6 6 .8 13z" fill="url(#ed)" /><path d="M11 16c-1 7 8 12 17 7-5 8-14 9-18 5-4-4-3-10 1-12z" fill="#0d4f96" /><path d="M15 20c-2-2-.5-5 1-5.500 4 0 3 3 2.500 4.500 3 3 8 2 11-.5-1 3-3 4-5 4.500-4 1-8-.5-9.500-3z" fill="#dfe0d6" /></svg></AppButton>
        <AppButton><svg width="29" viewBox="0 0 29 31"><path d="M8.500 8V2.500q0-1.500 1.500-1.500h9q1.500 0 1.500 1.500V8" fill="none" stroke="#29b5ee" strokeWidth="2" /><path d="M0 6h29v22q0 3-3 3H3q-3 0-3-3z" fill="#164a86" /><path d="M0 6h29v7H0z" fill="#1260ae" /><path d="M9 13h5v5H9z" fill="#f25022" /><path d="M15 13h5v5h-5z" fill="#7fba00" /><path d="M9 19h5v5H9z" fill="#00a4ef" /><path d="M15 19h5v5h-5z" fill="#ffb900" /></svg></AppButton>
        <AppButton><svg width="30" viewBox="0 0 30 31"><path d="M0 0h30v31H0z" fill="#25aad9" /><path d="M10 5L6 25h5z" fill="#0b2f5e" /><path d="M10 4h6v15.500h7V24H9z" fill="#fff" /></svg></AppButton>
        <AppButton><svg width="31" viewBox="0 0 31 31"><path d="M0 11L15.500 1 31 11v4H0z" fill="#0b5aa8" /><path d="M0 11l15.500 10L31 11v19H0z" fill="#2aa9e8" /><path d="M0 11l31 19H0z" fill="#39bdf5" /><path d="M3 11h25L15.500 20.500z" fill="#f4f4f4" /></svg></AppButton>
        <AppButton><svg width="31" viewBox="0 0 31 31"><defs><linearGradient id="md" x1="0" y1="0" x2=".3" y2="1"><stop offset="0" stopColor="#f58a3c" /><stop offset=".5" stopColor="#c46a8a" /><stop offset="1" stopColor="#8a5fd0" /></linearGradient></defs><circle cx="15.500" cy="15.500" r="15" fill="url(#md)" /><circle cx="15.500" cy="15.500" r="12.800" fill="#2c2c2e" /><path d="M11.500 8.500v14l10-7z" fill="#fff" /></svg></AppButton>
        <AppButton><svg width="28" viewBox="0 0 28 31"><path d="M0 0l14 6L28 0v24.500L14 31 0 24.500z" fill="#c8292f" /><path d="M7 9l7 4 7-4v11.500L14 24l-7-3.500z" fill="#dfe0d8" /></svg></AppButton>
        <AppButton>
          <svg width="30" viewBox="0 0 30 31">
            <circle cx="15" cy="15.500" r="15" fill="#fbc116" /><path d="M15 15.500L2 8a15 15 0 0 1 26 0z" fill="#e33b2e" /><path d="M2 8a15 15 0 0 0 12 22.500l6-12L9 18z" fill="#2ba24c" />
            <circle cx="15" cy="15.500" r="7" fill="#fff" /><circle cx="15" cy="15.500" r="5.500" fill="#2f77ea" />
            <circle cx="26" cy="4.500" r="10" fill="#8f7a5c" /><ellipse cx="25.500" cy="6" rx="5.500" ry="7.500" fill="#e5b39d" /><path d="M17.500 8Q17-5 27-5q8 1 8.500 9l-3 6Q33 0 26-1q-6 1-6.500 11z" fill="#96573a" />
            <path d="M22.500 5.500h2M27 5.500h2M24 9.500q1.500 1 3 0" stroke="#8c3d33" fill="none" />
          </svg><Mark w={8} />
        </AppButton>
        <Active><PptIcon s={31} /><Mark w={20} on /></Active>
        <Slot ml={124} w={14}><svg width="13" height="8" viewBox="0 0 13 8" {...st} stroke="#222" strokeWidth={1.6}><path d="M.8 7.200L6.500 1.200l5.700 6" /></svg></Slot>
        <Slot ml={23} w={20}><svg width="20" height="15" viewBox="0 0 20 15" fill="#e4e4e2" stroke="#222" strokeWidth="1.300"><path d="M5 14a4 4 0 0 1-.5-8 5.500 5.500 0 0 1 10.500-.5A4.300 4.300 0 0 1 15.500 14z" /><path d="M4.500 7c5-1 7 3 11 6.300H5A3.300 3.300 0 0 1 4.500 7z" stroke="none" fill="#a8a8a8" /></svg></Slot>
        <Stack ml={23} w={30} align="center"><span>ENG</span><span>US</span></Stack>
        <Slot ml={22} w={20}><svg width="20" height="16" viewBox="0 0 20 16" fill="none" stroke="#222" strokeWidth="1.500"><path d="M1 6a13 13 0 0 1 18 0M4 9a8.500 8.500 0 0 1 12 0M7 12a4.500 4.500 0 0 1 6 0" /><circle cx="10" cy="14" r="1.200" fill="#222" /></svg></Slot>
        <Slot ml={10} w={20}><svg width="20" height="16" viewBox="0 0 20 16" fill="none" stroke="#222" strokeWidth="1.300"><path d="M1 5.500h3L8.500 1.500v13L4 10.500H1zM11.500 5.500q1.800 2.500 0 5M14 3.500q3 4.500 0 9M16.500 1.500q4.500 6.500 0 13" /></svg></Slot>
        <Slot ml={10} w={20}><svg width="20" height="18" viewBox="0 0 20 18" fill="none" stroke="#222" strokeWidth="1.400"><path d="M7 4.500h8.500q2 0 2 2v7q0 2-2 2H3q-2 0-2-2V8M19 8v4" /><path d="M3 8h5v5.500H3z" fill="#222" stroke="none" /><path d="M4 0L1 6h2.500L2 10l5-6H4.500L6 0z" fill="#222" stroke="none" /></svg></Slot>
        <Stack ml={18} w={80} align="flex-end"><span>6:48 pm</span><span>18/09/2023</span></Stack>
        <Badge>1</Badge>
      </Taskbar>
    </Shell>
  );
}
